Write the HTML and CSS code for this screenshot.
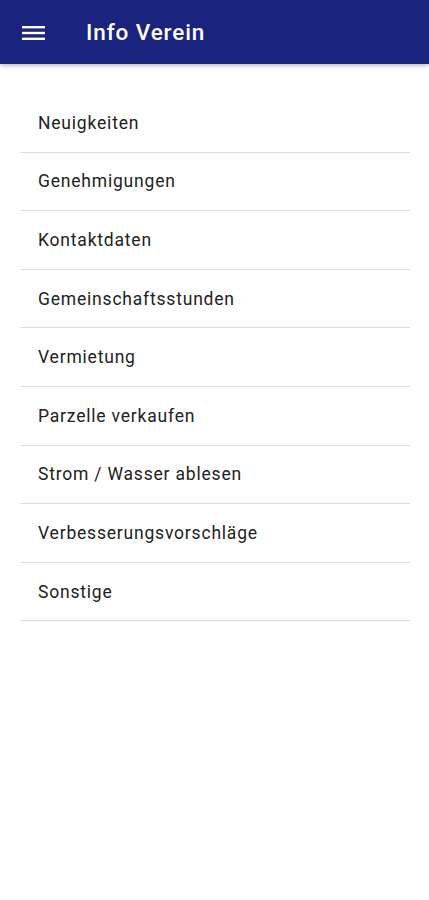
FILE: index.html
```html
<!DOCTYPE html>
<html lang="de">
<head>
    <meta charset="UTF-8">
    <meta name="viewport" content="width=device-width, initial-scale=1.0">
    <title>Info Verein</title>
    <link rel="stylesheet" href="styles.css">
</head>
<body>
    <header class="app-bar">
        <button class="menu-btn" aria-label="Menü">
            <svg width="23" height="14" viewBox="0 0 23 14">
                <rect x="0" y="0" width="23" height="2.4" fill="#fff"/>
                <rect x="0" y="5.8" width="23" height="2.4" fill="#fff"/>
                <rect x="0" y="11.6" width="23" height="2.4" fill="#fff"/>
            </svg>
        </button>
        <div class="app-title">Info Verein</div>
    </header>

    <ul class="menu-list">
        <li class="menu-item">Neuigkeiten</li>
        <li class="menu-item">Genehmigungen</li>
        <li class="menu-item">Kontaktdaten</li>
        <li class="menu-item">Gemeinschaftsstunden</li>
        <li class="menu-item">Vermietung</li>
        <li class="menu-item">Parzelle verkaufen</li>
        <li class="menu-item">Strom / Wasser ablesen</li>
        <li class="menu-item">Verbesserungsvorschläge</li>
        <li class="menu-item">Sonstige</li>
    </ul>
</body>
</html>
```

FILE: styles.css
```css
body {
    margin: 0;
    font-family: Roboto, "Noto Sans", Arial, sans-serif;
    background: #fff;
}

.app-bar {
    height: 64px;
    background: #1a237e;
    display: flex;
    align-items: center;
    padding: 0 0 0 22px;
    box-shadow: 0 2px 4px rgba(0,0,0,0.25);
    box-sizing: border-box;
}

.menu-btn {
    padding: 0;
    border: none;
    background: none;
    display: flex;
    align-items: center;
    margin: 1px 41px 0 0;
}

.app-title {
    color: #fff;
    font-size: 22.5px;
    font-weight: 500;
    letter-spacing: 0.9px;
}

.menu-list {
    list-style: none;
    margin: 30px 19px 0 20px;
    padding: 0;
}

.menu-item {
    height: 57.6px;
    display: flex;
    align-items: center;
    padding-left: 18px;
    border-bottom: 1px solid #dcdcdc;
    font-size: 17.5px;
    color: #222;
    letter-spacing: 0.8px;
}
```
